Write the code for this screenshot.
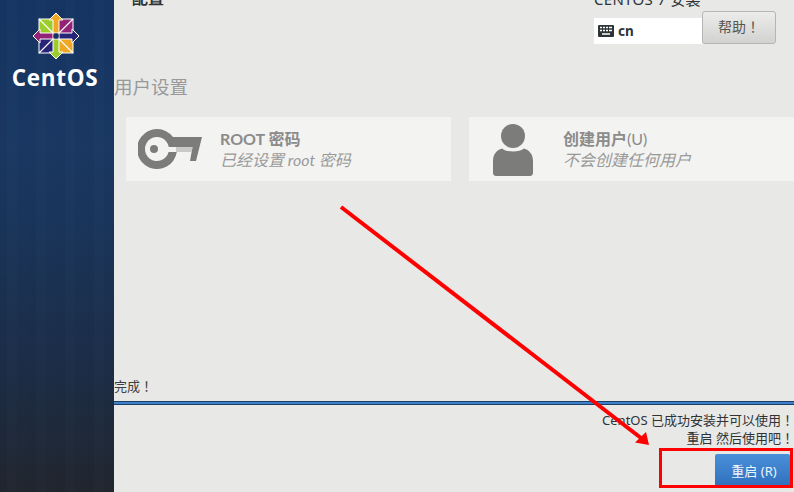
<div class="app">
  <aside class="side">
    <svg class="logo" viewBox="0 0 48 48" width="48" height="48" aria-hidden="true">
      <g stroke="#fff" stroke-width="1">
        <rect x="7" y="7" width="15" height="15" fill="#9ccd2a"/>
        <rect x="26" y="7" width="15" height="15" fill="#932279"/>
        <rect x="7" y="26" width="15" height="15" fill="#262577"/>
        <rect x="26" y="26" width="15" height="15" fill="#efa724"/>
        <path d="M7 7 L22 22 M41 7 L26 22 M7 41 L22 26 M41 41 L26 26" fill="none" stroke-width="1.2"/>
        <path d="M24 1 L31 8 H27 V21 H21 V8 H17 Z" fill="#efa724"/>
        <path d="M47 24 L40 31 V27 H27 V21 H40 V17 Z" fill="#262577"/>
        <path d="M24 47 L17 40 H21 V27 H27 V40 H31 Z" fill="#9ccd2a"/>
        <path d="M1 24 L8 17 V21 H21 V27 H8 V31 Z" fill="#932279"/>
      </g>
      <rect x="21.500" y="21.500" width="5" height="5" fill="#1b2f63"/>
    </svg>
    <div class="brand">CentOS</div>
  </aside>
  <main class="main">
    <header class="top">
      <h1>配置</h1>
      <div class="top-right">
        <div class="product">CENTOS 7 安装</div>
        <div class="controls">
          <div class="kbd">
            <svg viewBox="0 0 16 12" width="16" height="12" aria-hidden="true">
              <rect width="16" height="12" rx="1" fill="#2e3436"/>
              <path d="M2 2.500h2M5 2.500h2M8 2.500h2M11 2.500h3M2 5.500h2M5 5.500h2M8 5.500h2M11 5.500h3M4 9h8" stroke="#fff" stroke-width="1.400"/>
            </svg>
            <span>cn</span>
          </div>
          <button class="help">帮助！</button>
        </div>
      </div>
    </header>
    <h2>用户设置</h2>
    <div class="cards">
      <section class="card">
        <svg class="ico" viewBox="0 0 64 40" width="64" height="40" aria-hidden="true">
          <path fill="#7c7c7b" d="M35 8H64L58 32H52L54.500 18H30.800A12 12 0 1 0 30.600 23H38.800A20 20 0 1 1 35 8Z"/>
          <path fill="#c9c9c8" d="M38 18H54.500L53.600 23H38Z"/>
          <circle cx="16" cy="20" r="4" fill="#7c7c7b"/>
        </svg>
        <div class="txt">
          <div class="t">ROOT 密码</div>
          <div class="s">已经设置 root 密码</div>
        </div>
      </section>
      <section class="card second">
        <svg class="ico user" viewBox="0 0 40 52" width="40" height="52" aria-hidden="true">
          <circle cx="20" cy="12" r="12" fill="#7c7c7b"/>
          <path fill="#7c7c7b" d="M9 24.500C13 28.500 27 28.500 31 24.500C36 26 40 30 40 37V49C40 51 38.500 52 37 52H3C1.500 52 0 51 0 49V37C0 30 4 26 9 24.500Z"/>
        </svg>
        <div class="txt">
          <div class="t">创建用户<span class="u">(U)</span></div>
          <div class="s">不会创建任何用户</div>
        </div>
      </section>
    </div>
    <div class="spacer"></div>
    <div class="status">完成！</div>
    <div class="bar"></div>
    <div class="msg">
      <p>CentOS 已成功安装并可以使用！</p>
      <p>重启 然后使用吧！</p>
    </div>
    <div class="actions"><button class="reboot">重启 (R)</button></div>
  </main>
  <svg class="mark" viewBox="0 0 794 492" width="794" height="492" aria-hidden="true">
    <path d="M341 207L641 438" stroke="#ff0000" stroke-width="4" fill="none"/>
    <path d="M649 445L635 442.500L646 432Z" fill="#ff0000"/>
    <rect x="660.500" y="449.500" width="131" height="37" fill="none" stroke="#ff0000" stroke-width="3"/>
  </svg>
</div>

<style>
  :global(body) { margin: 0; }
  .app {
    position: relative;
    display: flex;
    width: 794px;
    height: 492px;
    overflow: hidden;
    background: #e8e8e7;
    font-family: "Noto Sans", "Noto Sans CJK TC", sans-serif;
  }
  .side {
    flex: none;
    width: 114px;
    display: flex;
    flex-direction: column;
    align-items: center;
    padding-top: 12px;
    box-sizing: border-box;
    background:
      repeating-linear-gradient(90deg, rgba(0,0,0,0.018) 0 7px, rgba(255,255,255,0.006) 7px 17px, rgba(0,0,0,0.012) 17px 29px),
      linear-gradient(180deg, #163563 0%, #193863 30%, #1a3458 50%, #1c2d47 75%, #21262f 100%);
  }
  .logo { display: block; margin-left: -3px; }
  .brand {
    margin-top: 3px;
    margin-left: -4px;
    color: #fff;
    font-family: "Open Sans", sans-serif;
    font-weight: 700;
    font-size: 22.500px;
    line-height: 30px;
    letter-spacing: 0.7px;
  }
  .main {
    flex: 1;
    min-width: 0;
    display: flex;
    flex-direction: column;
  }
  .top {
    display: flex;
    justify-content: space-between;
    height: 55px;
    margin-top: -11px;
    padding: 0 18px;
  }
  h1 {
    margin: 0;
    font-size: 16px;
    line-height: 18px;
    font-weight: 700;
    color: #2e3436;
  }
  .top-right {
    display: flex;
    flex-direction: column;
    width: 182px;
  }
  .product {
    height: 22px;
    font-size: 15px;
    line-height: 20px;
    color: #2e3436;
    letter-spacing: 0.3px;
    white-space: nowrap;
  }
  .controls {
    display: flex;
    align-items: flex-end;
    height: 33px;
  }
  .kbd {
    flex: none;
    width: 108px;
    height: 26px;
    background: #fff;
    display: flex;
    align-items: center;
    gap: 4px;
    padding-left: 4px;
    box-sizing: border-box;
    font-size: 13.500px;
    font-weight: 700;
    color: #2e3436;
  }
  .help {
    width: 74px;
    height: 33px;
    padding: 0 0 4px;
    border: 1px solid #b5b5b3;
    border-radius: 3px;
    background: linear-gradient(180deg, #ececeb, #d2d2d0);
    color: #555753;
    font: inherit;
    font-size: 14px;
  }
  h2 {
    margin: 31px 0 0;
    font-size: 18.500px;
    line-height: 24px;
    font-weight: 400;
    color: #999998;
  }
  .cards {
    display: flex;
    gap: 18px;
    margin: 18px -40px 0 12px;
  }
  .card {
    flex: none;
    width: 325px;
    height: 64px;
    background: #f3f3f2;
    display: flex;
    align-items: center;
    box-sizing: border-box;
    padding-left: 12px;
  }
  .second { width: 400px; padding-left: 24px; }
  .ico { flex: none; }
  .user { margin-right: 30px; margin-top: 1px; }
  .card:first-child .ico { margin-right: 18px; }
  .txt { color: #8b8b8a; }
  .t { font-size: 16px; line-height: 21px; font-weight: 700; font-family: "Lato", "Noto Sans CJK SC", sans-serif; }
  .u { font-weight: 400; }
  .s { font-size: 16px; line-height: 21px; font-style: italic; color: #999998; font-family: "Lato", "Noto Sans CJK SC", sans-serif; }
  .spacer { flex: 1; }
  .status {
    font-size: 13px;
    line-height: 18px;
    color: #3c3f41;
    margin-bottom: 6px;
  }
  .bar {
    height: 2px;
    background: #3d7fc9;
    border-top: 1px solid #1c3f66;
    border-bottom: 1px solid #1c3f66;
  }
  .msg {
    margin-top: 6px;
    text-align: right;
    font-size: 13px;
    line-height: 18px;
    color: #2e3436;
  }
  .msg p { margin: 0; }
  .actions {
    display: flex;
    justify-content: flex-end;
    margin-top: 7px;
    padding: 0 4px 5px 0;
  }
  .reboot {
    width: 75px;
    height: 33px;
    padding: 0 0 0 3px;
    border: none;
    border-radius: 2px 2px 0 0;
    background: linear-gradient(180deg, #4a90d9, #2f6fbd);
    color: #eef4fb;
    font: inherit;
    font-size: 13px;
  }
  .mark {
    position: absolute;
    inset: 0;
    pointer-events: none;
  }
</style>
